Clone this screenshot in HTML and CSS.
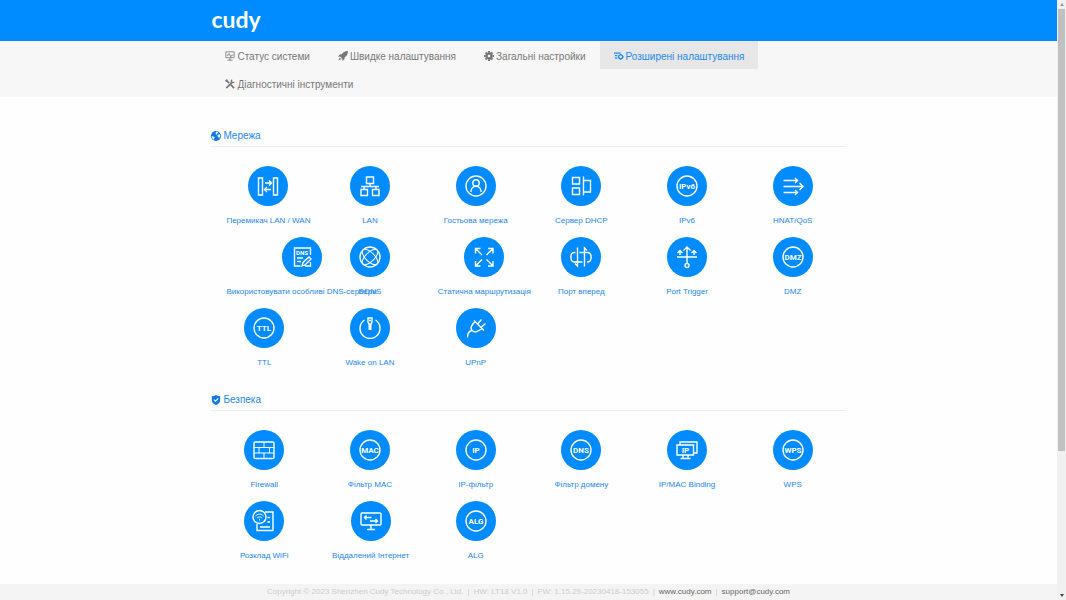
FILE: index.html
```html
<!DOCTYPE html>
<html lang="uk">
<head>
<meta charset="utf-8">
<meta name="viewport" content="width=device-width, initial-scale=1">
<title>Cudy</title>
<link rel="stylesheet" href="styles.css">
</head>
<body>
<div class="window">
<div class="page">
  <header class="header"><div class="container"><a class="logo" href="#">cudy</a></div></header>

  <nav class="nav"><ul class="container nav-list">
    <li><a class="nav-link" href="#"><svg class="glyph" viewBox="0 0 12 12"><path class="s" d="M1 1h10v7H1zM6 8v3M3 11h6M2 5h2l1-2 2 4 1-2h2"/></svg>Статус системи</a></li>
    <li><a class="nav-link" href="#"><svg class="glyph" viewBox="0 0 12 12"><path class="f" d="M12 0C8 .2 6 1.500 4.500 4L2 4.200 0 7l2.500-.3L5.300 9.500 5 12l2.800-2L8 7.500C10.500 6 11.800 4 12 0zM2 8L.500 11.500 4 10z"/></svg>Швидке налаштування</a></li>
    <li><a class="nav-link" href="#"><svg class="glyph" viewBox="0 0 12 12"><circle cx="6" cy="6" r="3" fill="none" stroke="currentColor" stroke-width="2.800"/><path d="M6 0v2M6 10v2M0 6h2M10 6h2M1.800 1.800l1.400 1.400M8.800 8.800l1.400 1.400M1.800 10.200l1.400-1.400M8.800 3.200l1.400-1.400" stroke="currentColor" stroke-width="2.400"/></svg>Загальні настройки</a></li>
    <li><a class="nav-link active" href="#"><svg class="glyph" viewBox="0 0 12 12"><path d="M0 2.500h8M1 5.500h3M1 8.500h3" stroke="currentColor" stroke-width="1.400"/><circle cx="8" cy="7" r="2.400" fill="none" stroke="currentColor" stroke-width="1.600"/><path d="M8 3.500v1M8 9.500v1M4.500 7h1M10.500 7h1" stroke="currentColor" stroke-width="1.400"/></svg>Розширені налаштування</a></li>
    <li><a class="nav-link" href="#"><svg class="glyph" viewBox="0 0 12 12"><path d="M1 1l4 4M7 7l4 4M1.500 11L9 3.500" stroke="currentColor" stroke-width="2"/><path d="M8 .8L7.500 4.500 11.200 4M.8 3L3 .8" fill="none" stroke="currentColor" stroke-width="1.600"/></svg>Діагностичні інструменти</a></li>
  </ul></nav>

  <main class="container main">
    <section>
      <h2 class="title"><svg class="glyph" viewBox="0 0 12 12"><circle cx="6" cy="6" r="6" fill="#0a7ae6"/><path fill="#fff" d="M5.500.8l2.800.2.400 1.300-1.400.8-.3 1.400L5.500 4 6 2.500zM.8 6.200l2.200.3 1.600 1.200-.8 1.300-.2 1.600C2 9.700 1 8 .8 6.200zM8.300 4.500l2.400-.6.500 2.400L9.500 9 8.800 7.200 7.600 6z"/></svg>Мережа</h2>
      <ul class="tiles">
        <li><a class="tile" href="#"><svg class="icon" viewBox="0 0 40 40"><path d="M10.500 12h4v17h-4zM25.500 12h4v17h-4zM17 17h6M21 14.500l2.500 2.500-2.500 2.500M23 23.500h-6M19 21l-2.500 2.500L19 26"/></svg><span>Перемикач LAN / WAN</span></a></li>
        <li><a class="tile" href="#"><svg class="icon" viewBox="0 0 40 40"><path d="M16.500 11h7v6.500h-7zM11 23.500h6.500v6H11zM22.500 23.500H29v6h-6.500zM20 17.500v3M11 20.500h18M14 20.500v3M26 20.500v3"/></svg><span>LAN</span></a></li>
        <li><a class="tile" href="#"><svg class="icon" viewBox="0 0 40 40"><circle cx="20" cy="20" r="10"/><circle cx="20" cy="17" r="3.200"/><path d="M14.800 26c.2-3.500 2.500-5.700 5.200-5.700s5 2.200 5.200 5.700"/></svg><span>Гостьова мережа</span></a></li>
        <li><a class="tile" href="#"><svg class="icon" viewBox="0 0 40 40"><path d="M11.500 11.500h7V18h-7zM11.500 22h7v6.500h-7zM22.500 10.500v19M22.500 14.500h7v11.500h-7"/></svg><span>Сервер DHCP</span></a></li>
        <li><a class="tile" href="#"><svg class="icon" viewBox="0 0 40 40"><circle cx="20" cy="20" r="10"/><text x="20" y="23">IPv6</text></svg><span>IPv6</span></a></li>
        <li><a class="tile" href="#"><svg class="icon" viewBox="0 0 40 40"><path d="M10.500 14.500h14M22 12l2.500 2.500L22 17M10.500 20.500h19.500M26.500 17l3.500 3.500-3.500 3.500M10.500 26.500h14M22 24l2.500 2.500L22 29"/></svg><span>HNAT/QoS</span></a></li>
        <li><a class="tile" href="#"><svg class="icon" viewBox="0 0 40 40"><path d="M28.500 18v-7h-16v18h6M15 21h6M15 24.500h4M20 29l1-3.500 6-5.500 2 2-6 6zM23 29h5.500v-4"/><text class="small" x="20" y="18">DNS</text></svg><span>Використовувати особливі DNS-сервери</span></a></li>
        <li><a class="tile" href="#"><svg class="icon" viewBox="0 0 40 40"><circle cx="20" cy="20" r="10"/><g class="thin"><ellipse cx="20" cy="20" rx="10" ry="4.500" transform="rotate(45 20 20)"/><ellipse cx="20" cy="20" rx="10" ry="4.500" transform="rotate(-45 20 20)"/></g></svg><span>DDNS</span></a></li>
        <li><a class="tile" href="#"><svg class="icon" viewBox="0 0 40 40"><path d="M18 18l-6.500-6.500M11.500 16.500v-5h5M22.500 18l6.500-6.500M24 11.500h5v5M18 22.500L11.500 29M11.500 24v5h5M22.500 22.500L29 29M24 29h5v-5"/></svg><span>Статична маршрутизація</span></a></li>
        <li><a class="tile" href="#"><svg class="icon" viewBox="0 0 40 40"><path d="M18.500 15.500h8a3.500 3.500 0 0 1 3.500 3.500v2.500a3.500 3.500 0 0 1-3.500 3.500H26M21.500 25h-8a3.500 3.500 0 0 1-3.500-3.500V19a3.500 3.500 0 0 1 3.500-3.500h1M16.500 10.500V29l-2.500-2.500M23.500 29.500V11l2.500 2.500"/></svg><span>Порт вперед</span></a></li>
        <li><a class="tile" href="#"><svg class="icon" viewBox="0 0 40 40"><path d="M10 20h20M20 26.500V10M16.500 13.500L20 10l3.500 3.500M13 18v-4.500M10.500 16l2.500-2.500 2.500 2.500M27 18v-4.500M24.500 16l2.500-2.500 2.500 2.500"/><circle cx="20" cy="28.500" r="2"/></svg><span>Port Trigger</span></a></li>
        <li><a class="tile" href="#"><svg class="icon" viewBox="0 0 40 40"><circle cx="20" cy="20" r="10"/><text x="20" y="23">DMZ</text></svg><span>DMZ</span></a></li>
        <li><a class="tile" href="#"><svg class="icon" viewBox="0 0 40 40"><circle cx="20" cy="20" r="10"/><text x="20" y="23">TTL</text></svg><span>TTL</span></a></li>
        <li><a class="tile" href="#"><svg class="icon" viewBox="0 0 40 40"><path d="M14.500 12a10 10 0 1 0 11 0"/><path d="M18 10h4v4l-1 2h-2l-1-2zM19 12.500h2"/><path class="thick" d="M20 16v6"/></svg><span>Wake on LAN</span></a></li>
        <li><a class="tile" href="#"><svg class="icon" viewBox="0 0 40 40"><path d="M18 12.500l10 10M19 13.500l-2.500 3c-2 2.500-1.800 4.500-.3 6s3.800 2 6 .3l4.300-2.300M22 15.500l3.500-4M25.500 19l4-3.500M16 22.500c-3 .5-4.500 3-4.500 7"/></svg><span>UPnP</span></a></li>
      </ul>
    </section>
    <section>
      <h2 class="title"><svg class="glyph" viewBox="0 0 12 12"><path fill="#0a7ae6" d="M6 0c1.500 1 3.200 1.500 5 1.500V6c0 3-2 5-5 6-3-1-5-3-5-6V1.500C2.800 1.500 4.500 1 6 0z"/><path d="M3.500 5.500l2 2 3.200-3.500" fill="none" stroke="#fff" stroke-width="1.400"/></svg>Безпека</h2>
      <ul class="tiles">
        <li><a class="tile" href="#"><svg class="icon" viewBox="0 0 40 40"><rect x="10" y="12" width="20" height="16.500" rx="1"/><g class="thin"><path d="M10 17.500h20M10 23h20M20 12v5.500M15 17.500V23M25.500 17.500V23M20 23v5.500"/></g></svg><span>Firewall</span></a></li>
        <li><a class="tile" href="#"><svg class="icon" viewBox="0 0 40 40"><circle cx="20" cy="20" r="10"/><text x="20" y="23">MAC</text></svg><span>Фільтр MAC</span></a></li>
        <li><a class="tile" href="#"><svg class="icon" viewBox="0 0 40 40"><circle cx="20" cy="20" r="10"/><text x="20" y="23">IP</text></svg><span>IP-фільтр</span></a></li>
        <li><a class="tile" href="#"><svg class="icon" viewBox="0 0 40 40"><circle cx="20" cy="20" r="10"/><text x="20" y="23">DNS</text></svg><span>Фільтр домену</span></a></li>
        <li><a class="tile" href="#"><svg class="icon" viewBox="0 0 40 40"><path d="M13 15v-3h17v11h-3M10 15h16.500v10H10zM16 25v3.500M21 25v3.500M13.500 28.500h10"/><text x="18.500" y="23">IP</text></svg><span>IP/MAC Binding</span></a></li>
        <li><a class="tile" href="#"><svg class="icon" viewBox="0 0 40 40"><circle cx="20" cy="20" r="10"/><text x="20" y="23">WPS</text></svg><span>WPS</span></a></li>
        <li><a class="tile" href="#"><svg class="icon" viewBox="0 0 40 40"><circle cx="15.500" cy="16" r="6.500"/><path d="M21 11h8v18.500H13V23M23.500 16.500h2.500M23.500 21h2.500M16 26h10"/><g class="thin"><path d="M11.500 15c2.500-2.500 5.500-2.500 8 0M13.200 17c1.500-1.500 3.200-1.500 4.600 0M15.500 18v1.500"/></g></svg><span>Розклад WiFi</span></a></li>
        <li><a class="tile" href="#"><svg class="icon" viewBox="0 0 40 40"><rect x="10" y="12" width="20" height="12" rx="1"/><path d="M20 24v4.500M16 28.500h8M13.500 16.500h7M15.500 14.500l-2 2 2 2M19 20h7.500M24.500 18l2 2-2 2"/></svg><span>Віддалений Інтернет</span></a></li>
        <li><a class="tile" href="#"><svg class="icon" viewBox="0 0 40 40"><circle cx="20" cy="20" r="10"/><text x="20" y="23">ALG</text></svg><span>ALG</span></a></li>
      </ul>
    </section>
  </main>

  <footer class="footer"><span>Copyright © 2023 Shenzhen Cudy Technology Co., Ltd.</span><span>|</span><span>HW: LT18 V1.0</span><span>|</span><span>FW: 1.15.29-20230418-153055</span><span>|</span><a href="#">www.cudy.com</a><span>|</span><a href="#">support@cudy.com</a></footer>
</div>
<div class="scrollbar"><span class="up"></span><div class="track"><div class="thumb"></div></div><span class="down"></span></div>
</div>
</body>
</html>
```
FILE: styles.css
```css
* { box-sizing: border-box; }
body { margin: 0; font-family: "Liberation Sans", Arial, sans-serif; font-size: 10px; background: #fefefe; color: #777; }
ul { list-style: none; margin: 0; padding: 0; }
a { color: inherit; text-decoration: none; }
.window { display: flex; min-height: 100vh; }
.page { flex: 1; min-width: 0; display: flex; flex-direction: column; }
.container { width: 60%; margin: 0 auto; }
.header { background: #008cff; height: 41px; }
.logo { display: block; color: #fff; font: 700 23px/38px Lato, sans-serif; }
.nav { background: #f7f7f7; }
.nav-list { display: flex; flex-wrap: wrap; }
.nav-link { display: flex; align-items: center; gap: 2px; height: 28px; padding: 2px 14px 0; white-space: nowrap; }
.nav-link.active { background: #e7e7e7; color: #2388ee; }
.glyph { width: 10px; height: 10px; flex: none; }
.glyph .s { fill: none; stroke: currentColor; stroke-width: 1; }
.glyph .f { fill: currentColor; }
.main { flex: 1; padding-top: 30px; }
.title { display: flex; align-items: center; gap: 2px; height: 20px; margin: 0 0 19px; padding-bottom: 4px; padding-top: 2px; border-bottom: 1px solid #eee; font-size: 10px; font-weight: 400; color: #2388ee; }
.tiles { display: grid; grid-template-columns: repeat(6, minmax(0, 1fr)); margin-bottom: 12px; }
.tiles li { height: 71px; padding: 0 15px; }
.tile { display: inline-flex; flex-direction: column; align-items: center; gap: 10px; min-width: 100%; white-space: nowrap; color: #2388ee; font-size: 8px; line-height: 10px; }
.icon { width: 40px; height: 40px; border-radius: 50%; background: #008cff; fill: none; stroke: #fff; stroke-width: 1.4; }
.icon text { fill: #fff; stroke: none; font: 700 8px Roboto, sans-serif; text-anchor: middle; }
.icon .small { font-size: 6px; }
.icon .thin { stroke-width: 1; }
.icon .thick { stroke-width: 3; }
.footer { display: flex; justify-content: center; gap: 4px; background: #f4f4f4; height: 16px; line-height: 16px; font-size: 8px; white-space: nowrap; color: #ccc; }
.footer a { color: #666; }
.scrollbar { flex: none; width: 9px; display: flex; flex-direction: column; align-items: center; background: #f1f1f1; }
.track { flex: 1; width: 100%; padding: 0 1px; }
.thumb { height: 76%; background: #c1c1c1; }
.up, .down { height: 9px; padding: 3px 0; }
.up::before, .down::before { content: ""; display: block; border: 2px solid transparent; }
.up::before { border-top: 0; border-bottom: 3px solid #999; }
.down::before { border-bottom: 0; border-top: 3px solid #444; }
```
